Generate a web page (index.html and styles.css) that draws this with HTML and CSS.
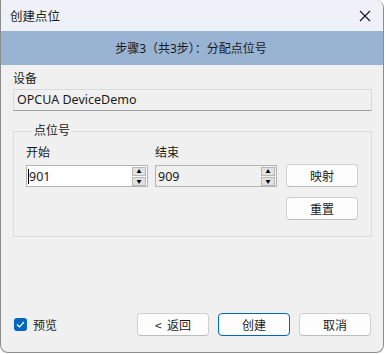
FILE: index.html
```html
<!DOCTYPE html>
<html lang="zh-CN">
<head>
    <meta charset="UTF-8">
    <title>创建点位</title>
    <link rel="stylesheet" href="styles.css">
</head>
<body>
    <div class="dialog">
        <div class="titlebar">
            <span class="title">创建点位</span>
            <svg class="close" width="12" height="12" viewBox="0 0 12 12">
                <path d="M1 1 L11 11 M11 1 L1 11" stroke="#1a1a1a" stroke-width="1.2" fill="none"/>
            </svg>
        </div>

        <div class="banner">步骤3（共3步）：分配点位号</div>

        <div class="content">
            <div class="label">设备</div>
            <div class="textbox readonly">OPCUA DeviceDemo</div>

            <fieldset class="group">
                <legend>点位号</legend>
                <div class="group-row">
                    <div class="field">
                        <div class="label">开始</div>
                        <div class="spin">
                            <span class="spin-value"><span class="caret"></span>901</span>
                            <span class="spin-buttons">
                                <span class="spin-btn">&#9650;</span>
                                <span class="spin-btn">&#9660;</span>
                            </span>
                        </div>
                    </div>
                    <div class="field">
                        <div class="label">结束</div>
                        <div class="spin disabled">
                            <span class="spin-value">909</span>
                            <span class="spin-buttons">
                                <span class="spin-btn">&#9650;</span>
                                <span class="spin-btn">&#9660;</span>
                            </span>
                        </div>
                    </div>
                    <div class="side-buttons">
                        <button class="btn">映射</button>
                        <button class="btn">重置</button>
                    </div>
                </div>
            </fieldset>
        </div>

        <div class="footer">
            <label class="check">
                <span class="box">
                    <svg width="9" height="7" viewBox="0 0 9 7">
                        <path d="M1 3.5 L3.5 6 L8 1" stroke="#fff" stroke-width="1.2" fill="none"/>
                    </svg>
                </span>
                预览
            </label>
            <div class="actions">
                <button class="btn">&lt;&nbsp;&nbsp;返回</button>
                <button class="btn primary">创建</button>
                <button class="btn">取消</button>
            </div>
        </div>
    </div>
</body>
</html>
```

FILE: styles.css
```css
/* Basic reset */
* {
    margin: 0;
    padding: 0;
    box-sizing: border-box;
}

body {
    font-family: "Noto Sans", "Noto Sans CJK SC", sans-serif;
    font-size: 12px;
    color: #1a1a1a;
    background-color: #ffffff;
    width: 386px;
    height: 354px;
}

/* Window frame */
.dialog {
    width: 384px;
    height: 353px;
    background-color: #f0f0f0;
    border: 1px solid #8c8c8c;
    border-top: none;
    border-radius: 0 8px 8px 8px;
    overflow: hidden;
    display: flex;
    flex-direction: column;
}

.titlebar {
    height: 31px;
    background-color: #eef2f8;
    display: flex;
    align-items: center;
    justify-content: space-between;
    padding: 0 12px 0 9px;
}

.title {
    font-size: 12.5px;
}

.banner {
    height: 34px;
    background-color: #98b4d2;
    display: flex;
    align-items: center;
    justify-content: center;
    font-size: 12px;
    padding-right: 2px;
    word-spacing: 2px;
}

/* Main content */
.content {
    padding: 5px 11px 0 12px;
}

.label {
    height: 17px;
    line-height: 17px;
}

.textbox {
    height: 22px;
    margin-top: 2px;
    padding-left: 3px;
    line-height: 20px;
    border: 1px solid #d9d9d9;
    border-bottom-color: #a0a0a0;
    background-color: #f0f0f0;
    font-size: 12.5px;
}

/* Group box */
.group {
    margin-top: 13px;
    height: 113px;
    border: 1px solid #dcdcdc;
    padding: 0 12px;
}

.group legend {
    margin-left: 6px;
    padding: 0 2px;
    line-height: 14px;
}

.group-row {
    display: flex;
    gap: 7px;
    margin-top: 6px;
}

.field {
    width: 122px;
}

.spin {
    margin-top: 4px;
    height: 22px;
    border: 1px solid #b4b4b4;
    background-color: #ffffff;
    display: flex;
    align-items: center;
    justify-content: space-between;
    padding: 1px;
}

.spin.disabled {
    background-color: #f0f0f0;
}

.spin-value {
    position: relative;
    padding-left: 1px;
    font-size: 12.5px;
}

.caret {
    position: absolute;
    left: 0;
    top: 1px;
    width: 1px;
    height: 15px;
    background-color: #000;
}

.spin-buttons {
    display: flex;
    flex-direction: column;
    gap: 1px;
    width: 14px;
    height: 18px;
}

.spin-btn {
    flex: 1;
    background-color: #e1e1e1;
    border: 1px solid #b8b8b8;
    font-size: 5px;
    line-height: 7px;
    text-align: center;
    color: #000;
}

.side-buttons {
    margin-left: 2px;
    padding-top: 20px;
    display: flex;
    flex-direction: column;
    gap: 10px;
}

/* Buttons */
.btn {
    font-family: "Noto Sans CJK SC", sans-serif;
    font-size: 12px;
    width: 72px;
    height: 23px;
    background-color: #fdfdfd;
    border: 1px solid #d0d0d0;
    border-bottom-color: #bcbcbc;
    border-radius: 4px;
    color: #1a1a1a;
}

.btn.primary {
    border: 1px solid #0067c0;
}

/* Footer */
.footer {
    margin-top: auto;
    padding: 0 12px 16px 13px;
    display: flex;
    align-items: center;
    justify-content: space-between;
}

.check {
    display: flex;
    align-items: center;
    gap: 6px;
}

.box {
    width: 13px;
    height: 13px;
    border-radius: 3px;
    background-color: #0067c0;
    display: flex;
    align-items: center;
    justify-content: center;
}

.actions {
    display: flex;
    gap: 9px;
}
```
